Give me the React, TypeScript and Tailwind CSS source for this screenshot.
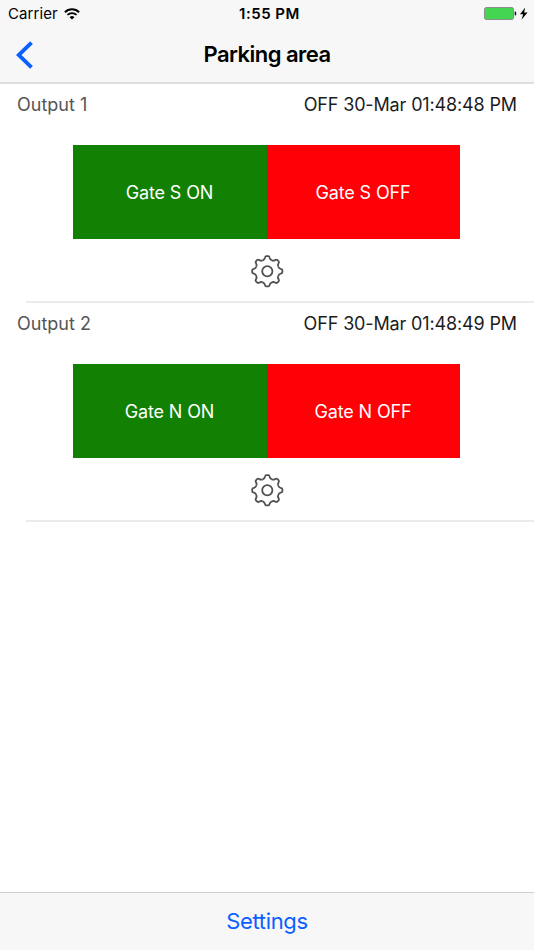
interface Output {
  id: number;
  name: string;
  status: string;
  gate: string;
}

const outputs: Output[] = [
  { id: 1, name: "Output 1", status: "OFF 30-Mar 01:48:48 PM", gate: "Gate S" },
  { id: 2, name: "Output 2", status: "OFF 30-Mar 01:48:49 PM", gate: "Gate N" },
];

function WifiIcon() {
  return (
    <svg width="16" height="12" viewBox="0 0 16 12" fill="none">
      <path d="M.9 4.2a10.2 10.2 0 0 1 14.2 0" stroke="#000" strokeWidth="1.9" />
      <path d="M3.4 6.9a6.6 6.6 0 0 1 9.2 0" stroke="#000" strokeWidth="1.8" />
      <path d="M8 11.6 5.6 9.2a3.5 3.5 0 0 1 4.8 0z" fill="#000" />
    </svg>
  );
}

function BatteryIcon() {
  return (
    <svg width="44" height="14" viewBox="0 0 44 14">
      <rect x=".5" y=".5" width="29" height="12" rx="1.8" fill="#44d552" stroke="#8c8c8c" />
      <path d="M30.7 4.5h.5a1.2 1.2 0 0 1 1 1.2v1.6a1.2 1.2 0 0 1-1 1.2h-.5z" fill="#000" />
      <path d="M41.2.5 36 7.3h3.2l-1.7 5.4 6-7.2h-3.4z" fill="#000" />
    </svg>
  );
}

// one tooth, from the middle of a valley to the middle of the next
const tooth =
  "M-4.55-11C-3.4-11.5-2.7-12.3-2.4-13.4C-2.1-14.7-1.8-15.1-1-15.1L1-15.1C1.8-15.1 2.1-14.7 2.4-13.4C2.7-12.3 3.4-11.5 4.55-11";

function GearIcon() {
  return (
    <svg width="34" height="34" viewBox="-17.3 -17.3 34 34" fill="none" stroke="#505050" strokeWidth="1.8">
      {[0, 45, 90, 135, 180, 225, 270, 315].map((angle) => (
        <path key={angle} d={tooth} transform={`rotate(${angle})`} />
      ))}
      <circle r="5.1" />
    </svg>
  );
}

function OutputRow({ name, status, gate }: Output) {
  return (
    <li className="flex h-[219px] flex-col">
      <div className="flex h-[61px] justify-between px-[17px] pt-[7px] text-[18px] leading-7">
        <span className="text-[#555]">{name}</span>
        <span className="tracking-[-0.14px] text-[#1c1c1c]">{status}</span>
      </div>
      <div className="mx-[73px] grid h-[94px] grid-cols-[194px_193px] text-[18px] tracking-[-0.15px] text-white">
        <button className="bg-[#128003] pr-px">{gate} ON</button>
        <button className="bg-[#ff0006] pr-px">{gate} OFF</button>
      </div>
      <div className="ml-[26px] flex flex-1 justify-center border-b-2 border-[#ebebeb] pt-[15px] pr-[26px]">
        <button className="h-[34px]">
          <GearIcon />
        </button>
      </div>
    </li>
  );
}

export default function App() {
  return (
    <div className="flex h-[950px] w-[534px] flex-col bg-white font-['Inter','Liberation_Sans',sans-serif] text-black">
      <header className="h-[84px] border-b-2 border-[#dedede] bg-[#f7f7f7]">
        <div className="grid h-[27px] grid-cols-3 items-center pr-[6px] pl-2 text-[15px]">
          <div className="flex items-center gap-[6px]">
            <span className="pt-[2px] tracking-[0.1px]">Carrier</span>
            <WifiIcon />
          </div>
          <span className="pt-[2px] pl-[3px] text-center font-semibold tracking-[0.5px]">1:55 PM</span>
          <div className="flex justify-end">
            <BatteryIcon />
          </div>
        </div>
        <div className="grid h-[55px] grid-cols-[60px_1fr_60px] items-center">
          <button className="pl-4">
            <svg width="18" height="28" viewBox="0 0 18 28" fill="none">
              <path d="M15.5 1.7 2.7 14l12.8 12.3" stroke="#0a60ff" strokeWidth="3.9" />
            </svg>
          </button>
          <h1 className="text-center text-[22px] font-semibold tracking-[-0.53px]">Parking area</h1>
        </div>
      </header>
      <ul className="flex-1">
        {outputs.map((output) => (
          <OutputRow key={output.id} {...output} />
        ))}
      </ul>
      <footer className="flex h-[58px] items-center justify-center border-t border-[#cfcfcf] bg-[#f7f7f7]">
        <button className="text-[22px] tracking-[-0.35px] text-[#0a60ff]">Settings</button>
      </footer>
    </div>
  );
}
